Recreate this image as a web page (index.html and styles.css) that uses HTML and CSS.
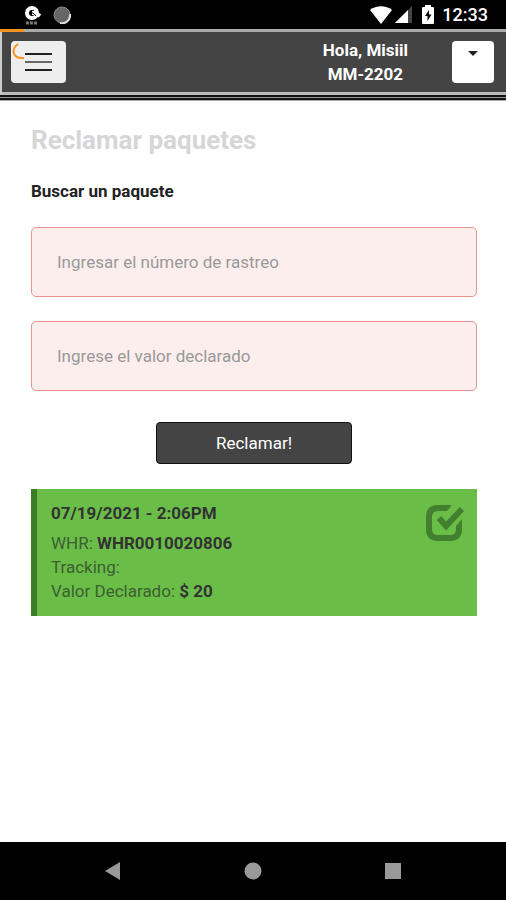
FILE: index.html
```html
<!DOCTYPE html>
<html lang="es">
<head>
  <meta charset="UTF-8">
  <meta name="viewport" content="width=device-width, initial-scale=1.0">
  <title>Reclamar paquetes</title>
  <link rel="stylesheet" href="styles.css">
</head>
<body>
  <!-- Status bar -->
  <div class="status-bar">
    <div class="status-left">
      <svg width="18" height="20" viewBox="0 0 18 20">
        <circle cx="8" cy="8" r="5" fill="none" stroke="#fff" stroke-width="4"/>
        <path d="M8 8h4l4 3" fill="none" stroke="#fff" stroke-width="4"/>
        <path d="M7 8h2l3 3" fill="none" stroke="#000" stroke-width="1"/>
        <path d="M2 18h12" stroke="#777" stroke-width="3" stroke-dasharray="3 1"/>
      </svg>
      <svg width="18" height="18" viewBox="0 0 18 18">
        <circle cx="9" cy="9" r="8" fill="#666" stroke="#888"/>
        <path d="M17 8a8 8 0 0 1-10 9" fill="none" stroke="#ddd" stroke-width="2"/>
      </svg>
    </div>
    <div class="status-right">
      <svg width="22" height="18" viewBox="0 0 22 18">
        <path d="M0 4C6-1 16-1 22 4L11 18z" fill="#fff"/>
      </svg>
      <svg class="signal" width="17" height="17" viewBox="0 0 17 17">
        <path d="M17 0v17H0z" fill="#444"/>
        <path d="M13 4v13H0z" fill="#fff"/>
      </svg>
      <svg class="battery" width="12" height="19" viewBox="0 0 12 19">
        <path d="M3 0h6v2h2q1 0 1 1v15q0 1-1 1H1q-1 0-1-1V3q0-1 1-1h2z" fill="#fff"/>
        <path d="M7 5l-4 6h2.500v5l4-6.500H7z" fill="#000"/>
      </svg>
      <span class="clock">12:33</span>
    </div>
  </div>

  <!-- Header -->
  <header class="header">
    <div class="progress"></div>
    <button class="menu-btn" type="button" aria-label="Menú">
      <svg width="54" height="42" viewBox="0 0 54 42">
        <path d="M14 13h27M14 29h27" stroke="#222" stroke-width="2"/>
        <path d="M14 21h27" stroke="#666" stroke-width="2"/>
        <path d="M7 3C0 8 1 18 13 17" fill="none" stroke="#f7941d" stroke-width="2"/>
      </svg>
    </button>
    <div class="user">
      <div>Hola, Misiil</div>
      <div>MM-2202</div>
    </div>
    <button class="drop-btn" type="button" aria-label="Cuenta">
      <svg width="10" height="5" viewBox="0 0 10 5">
        <path d="M0 0h10L5 5z" fill="#222"/>
      </svg>
    </button>
  </header>
  <div class="header-lines"></div>

  <!-- Content -->
  <main class="content">
    <h1>Reclamar paquetes</h1>
    <form>
      <label class="form-title" for="rastreo">Buscar un paquete</label>
      <input class="field" id="rastreo" type="text" placeholder="Ingresar el número de rastreo">
      <input class="field" id="valor" type="text" placeholder="Ingrese el valor declarado" aria-label="Valor declarado">
      <button class="claim-btn" type="button">Reclamar!</button>
    </form>

    <div class="package">
      <div class="package-info">
        <div class="package-date">07/19/2021 - 2:06PM</div>
        <div>WHR: <b>WHR0010020806</b></div>
        <div>Tracking:</div>
        <div>Valor Declarado: <b>$ 20</b></div>
      </div>
      <svg width="40" height="39" viewBox="0 0 40 39" fill="none" stroke="#428030">
        <path d="M27 2l-5 6H13Q7 8 7 14v12q0 6 6 6h12q6 0 6-6v-3l6-7v10q0 12-12 12H13Q1 38 1 26V14Q1 2 13 2z" fill="#428030" stroke="none"/>
        <path d="M14 15l7 8L37 6" stroke-width="6"/>
      </svg>
    </div>
  </main>

  <!-- Navigation bar -->
  <nav class="nav-bar">
    <button type="button" aria-label="Atrás">
      <svg width="18" height="18" viewBox="0 0 18 18"><path d="M16 0v18L1 9z" fill="#999"/></svg>
    </button>
    <button type="button" aria-label="Inicio">
      <svg width="18" height="18" viewBox="0 0 18 18"><circle cx="9" cy="9" r="8.500" fill="#999"/></svg>
    </button>
    <button type="button" aria-label="Recientes">
      <svg width="18" height="18" viewBox="0 0 18 18"><path d="M1 1h16v16H1z" fill="#999"/></svg>
    </button>
  </nav>
</body>
</html>
```

FILE: styles.css
```css
* {
  box-sizing: border-box;
}

body {
  font-family: Roboto, sans-serif;
  font-size: 17px;
  background-color: #fff;
  margin: 0;
  min-height: 100vh;
  display: flex;
  flex-direction: column;
}

button {
  font-family: inherit;
  padding: 0;
  border: none;
  cursor: pointer;
}

svg {
  display: block;
}

.status-bar {
  display: flex;
  justify-content: space-between;
  align-items: center;
  height: 29px;
  padding: 0 18px 0 24px;
  background-color: #000;
  color: #fff;
}

.status-left,
.status-right {
  display: flex;
  align-items: center;
}

.status-left {
  gap: 11px;
}

.signal {
  margin-left: 3px;
}

.battery {
  margin-left: 10px;
}

.clock {
  margin-left: 8px;
  font-size: 18px;
  font-weight: 500;
  line-height: 31px;
}

.header {
  position: relative;
  display: flex;
  align-items: center;
  height: 66px;
  padding: 0 12px 0 9px;
  background-color: #444;
  border: 3px solid #aaa;
  border-left: 2px solid #ccc;
  border-right: none;
  border-bottom-color: #bbb;
}

.progress {
  position: absolute;
  top: -3px;
  left: -2px;
  width: 24px;
  height: 3px;
  background-color: #f7941d;
}

.menu-btn {
  width: 55px;
  height: 42px;
  background-color: #eee;
  border-radius: 4px;
}

.user {
  margin-left: auto;
  color: #fff;
  font-weight: 700;
  line-height: 24px;
  text-align: center;
}

.drop-btn {
  display: flex;
  justify-content: center;
  width: 42px;
  height: 42px;
  margin-left: 44px;
  padding-top: 10px;
  background-color: #fff;
  border-radius: 4px;
}

/* thin stripes under the header */
.header-lines {
  height: 6px;
  background: linear-gradient(#111 0 2px, #999 2px 3px, #111 3px 5px, #aaa 5px);
}

.content {
  flex: 1;
  padding: 23px 29px 24px 31px;
}

h1 {
  margin: 0 0 23px;
  color: #d6d6d6;
  font-size: 26px;
  font-weight: 700;
  line-height: 32px;
}

form {
  display: flex;
  flex-direction: column;
}

.form-title {
  margin-bottom: 24px;
  color: #222;
  font-weight: 700;
  line-height: 24px;
}

.field {
  width: 100%;
  height: 70px;
  margin-bottom: 24px;
  padding: 0 25px;
  background-color: #fdeeee;
  border: 1px solid #eb9292;
  border-radius: 5px;
  color: #444;
  font-family: inherit;
  font-size: 17px;
}

.field::placeholder {
  color: #999;
  opacity: 1;
}

.claim-btn {
  align-self: center;
  width: 44%;
  height: 42px;
  margin: 7px 0 25px;
  background-color: #444;
  border: 1px solid #111;
  border-radius: 4px;
  color: #fff;
  font-size: 17px;
}

.package {
  display: flex;
  justify-content: space-between;
  align-items: flex-start;
  padding: 12px 12px 13px 14px;
  background-color: #6abe48;
  border-left: 6px solid #3b7d26;
  color: #3c6030;
  line-height: 24px;
}

.package svg {
  margin-top: 2px;
}

.package b,
.package-date {
  color: #333;
  font-weight: 700;
}

.package-date {
  margin-bottom: 6px;
}

.nav-bar {
  display: flex;
  justify-content: center;
  align-items: center;
  gap: 122px;
  height: 58px;
  background-color: #000;
}

.nav-bar button {
  background: none;
}
```
